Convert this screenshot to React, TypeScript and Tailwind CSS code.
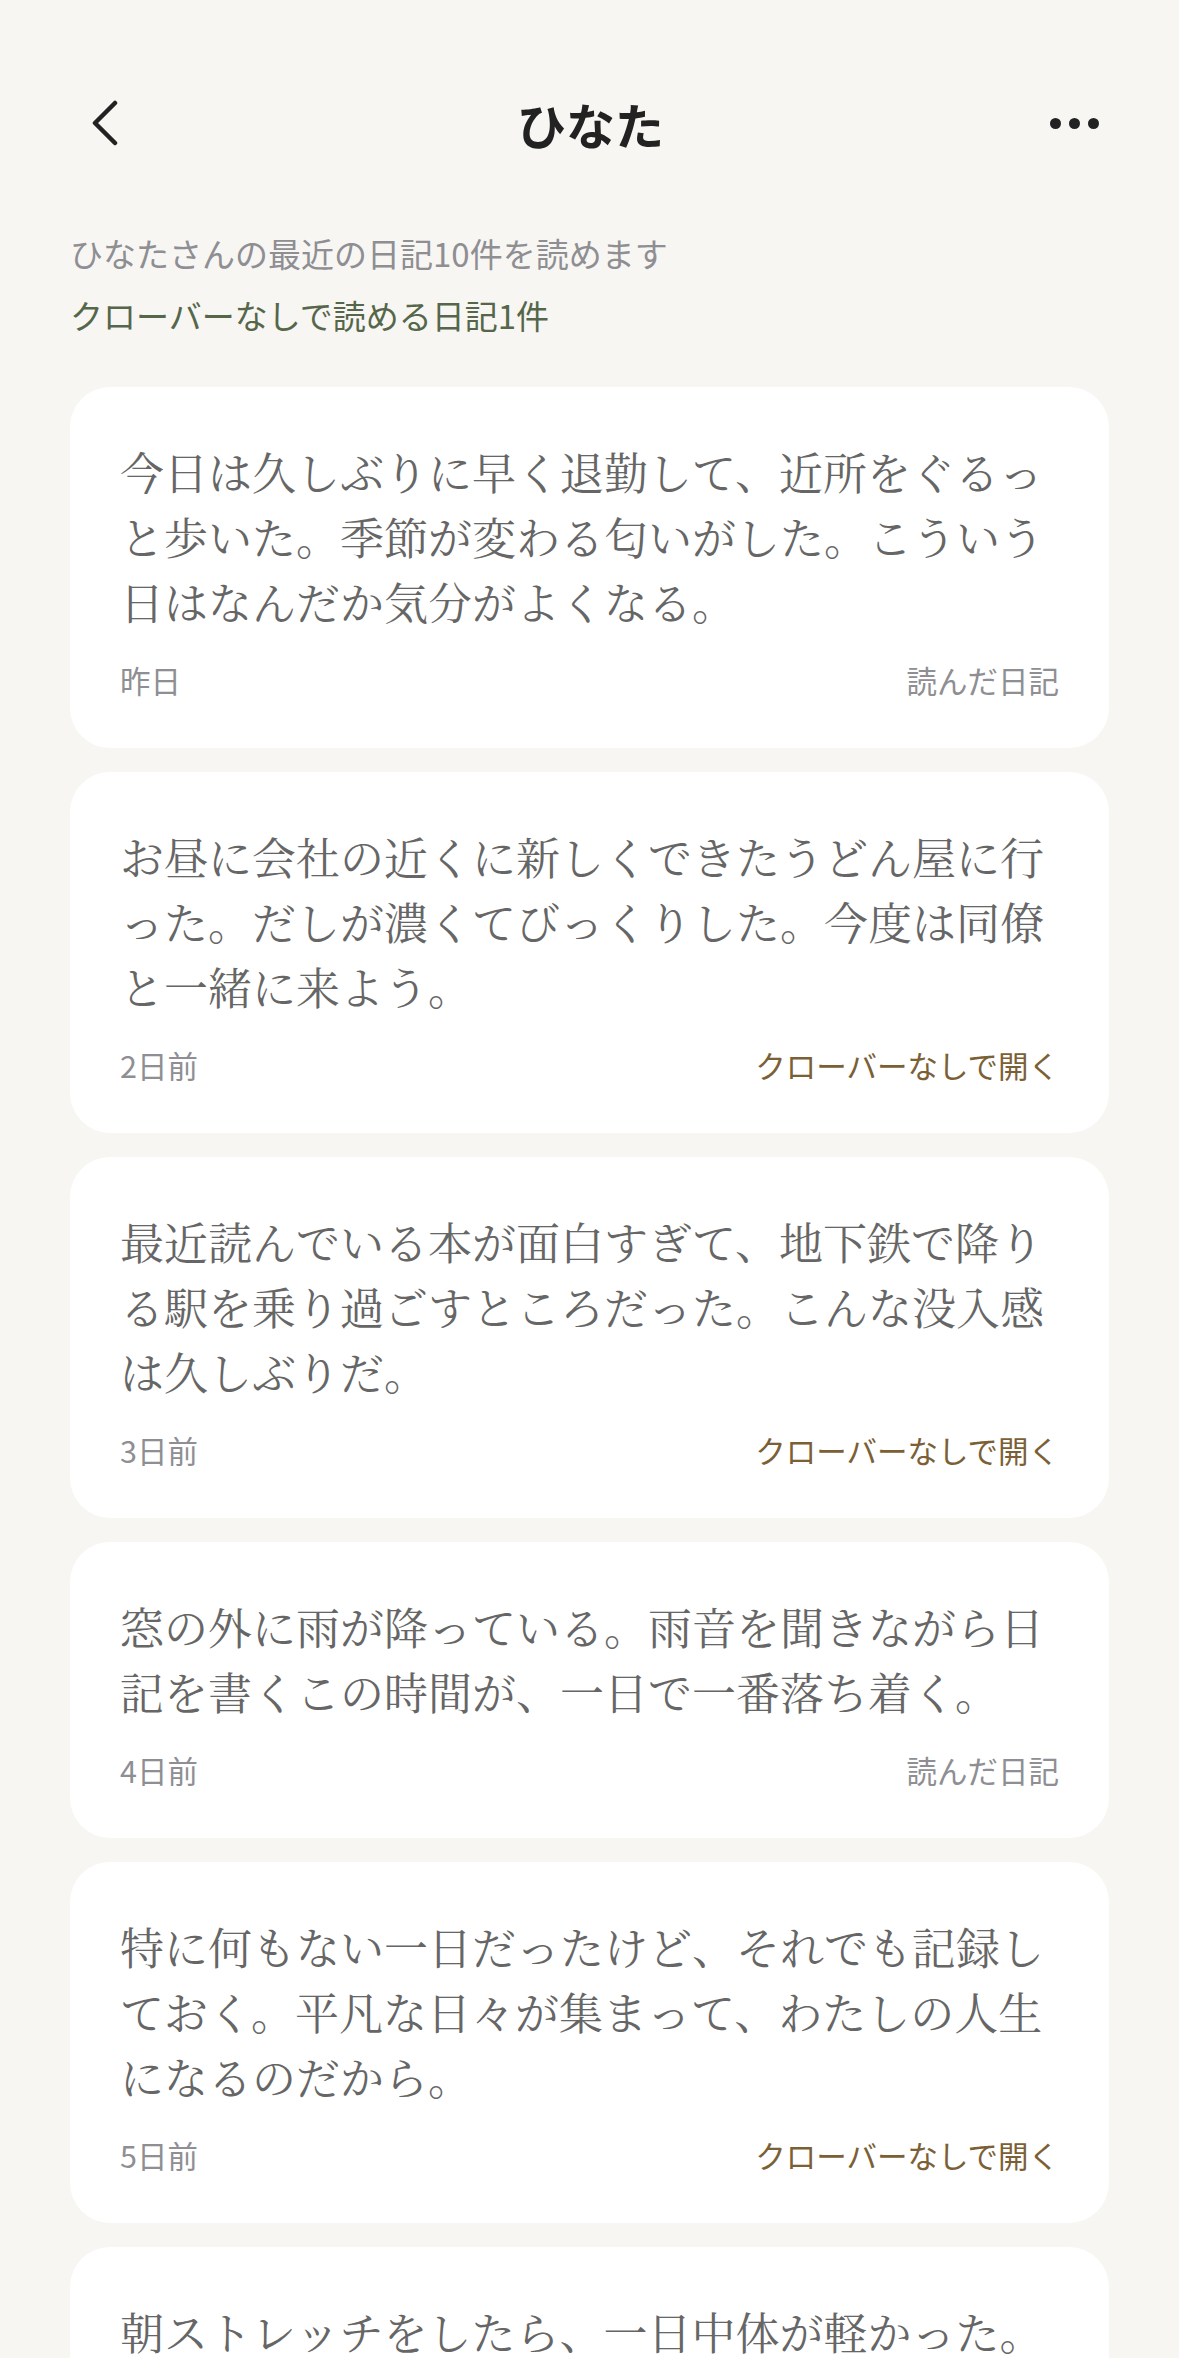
const SANS = "font-['Noto_Sans_CJK_JP','Noto_Sans',sans-serif]";

type Entry = {
  text: string;
  date: string;
  status: "read" | "open";
};

const ENTRIES: Entry[] = [
  {
    text: "今日は久しぶりに早く退勤して、近所をぐるっと歩いた。季節が変わる匂いがした。こういう日はなんだか気分がよくなる。",
    date: "昨日",
    status: "read",
  },
  {
    text: "お昼に会社の近くに新しくできたうどん屋に行った。だしが濃くてびっくりした。今度は同僚と一緒に来よう。",
    date: "2日前",
    status: "open",
  },
  {
    text: "最近読んでいる本が面白すぎて、地下鉄で降りる駅を乗り過ごすところだった。こんな没入感は久しぶりだ。",
    date: "3日前",
    status: "open",
  },
  {
    text: "窓の外に雨が降っている。雨音を聞きながら日記を書くこの時間が、一日で一番落ち着く。",
    date: "4日前",
    status: "read",
  },
  {
    text: "特に何もない一日だったけど、それでも記録しておく。平凡な日々が集まって、わたしの人生になるのだから。",
    date: "5日前",
    status: "open",
  },
  {
    text: "朝ストレッチをしたら、一日中体が軽かった。明日も続けてみようと思う。",
    date: "6日前",
    status: "read",
  },
];

function DiaryCard({ entry }: { entry: Entry }) {
  return (
    <div className="bg-white rounded-[40px] pt-[52px] pb-[48px] px-[50px]">
      {/* body is set in a mincho face when one is installed */}
      <p className="font-['Noto_Serif_CJK_JP','Noto_Serif_JP','Noto_Sans_CJK_JP',serif] text-[44px] leading-[65px] text-[#666666]">
        {entry.text}
      </p>
      <div className={`mt-[26px] flex items-center justify-between text-[30.5px] leading-[40px] ${SANS}`}>
        <span className="text-[#8e8e93]">{entry.date}</span>
        {entry.status === "read" ? (
          <span className="text-[#8e8e93]">読んだ日記</span>
        ) : (
          <span className="text-[#7b6035]">クローバーなしで開く</span>
        )}
      </div>
    </div>
  );
}

export default function App() {
  return (
    <div className={`h-[2358px] overflow-hidden bg-[#f7f6f2] ${SANS}`}>
      {/* Header */}
      <div className="grid grid-cols-[1fr_auto_1fr] items-center h-[80px] mt-[83px] pl-[90px] pr-[80px]">
        <div className="flex items-center">
          <svg width="30" height="46" viewBox="0 0 30 46" fill="none">
            <path
              d="M25 3 L5 23 L25 43"
              stroke="#222222"
              strokeWidth="4.5"
              strokeLinecap="round"
              strokeLinejoin="round"
            />
          </svg>
        </div>
        <h1 className="text-[49px] font-bold text-[#222222] leading-none -ml-[8px]">ひなた</h1>
        <div className="flex items-center justify-end gap-[8px]">
          <span className="w-[11px] h-[11px] rounded-full bg-[#222222]" />
          <span className="w-[11px] h-[11px] rounded-full bg-[#222222]" />
          <span className="w-[11px] h-[11px] rounded-full bg-[#222222]" />
        </div>
      </div>

      {/* Summary */}
      <div className="px-[70px] mt-[68px] flex flex-col gap-[18px] text-[33px] leading-[44px]">
        <p className="text-[#8e8e93]">ひなたさんの最近の日記10件を読めます</p>
        <p className="text-[#55664a]">クローバーなしで読める日記1件</p>
      </div>

      {/* Diary list */}
      <div className="px-[70px] mt-[50px] flex flex-col gap-[24px]">
        {ENTRIES.map((e, i) => (
          <DiaryCard key={i} entry={e} />
        ))}
      </div>
    </div>
  );
}
